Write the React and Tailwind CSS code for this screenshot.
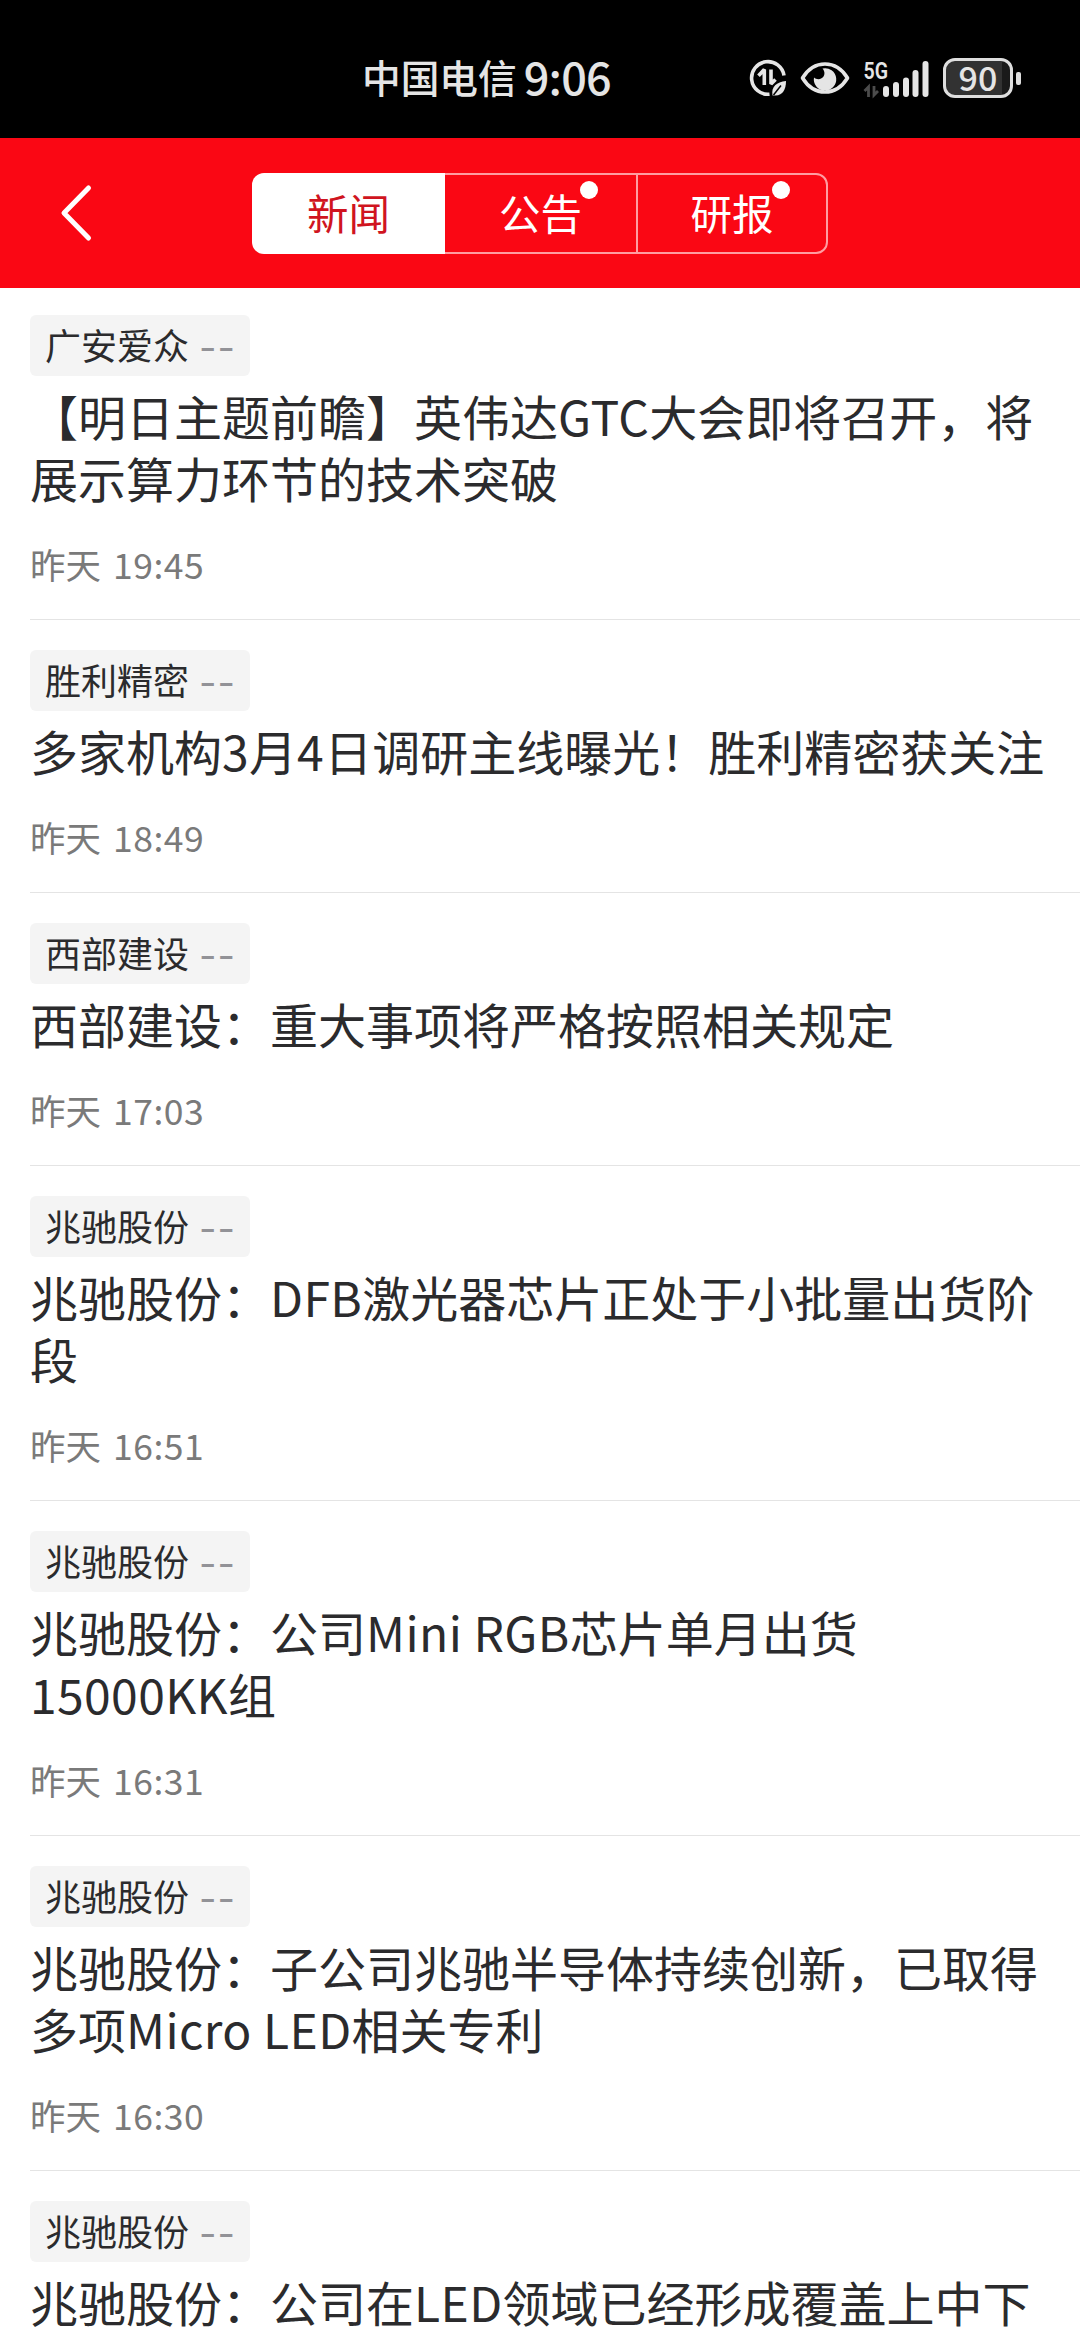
const ITEMS = [
  { stock: "广安爱众", lines: ["【明日主题前瞻】英伟达|GTC|大会即将召开，将", "展示算力环节的技术突破"], time: "19:45" },
  { stock: "胜利精密", lines: ["多家机构|3|月|4|日调研主线曝光！胜利精密获关注"], time: "18:49" },
  { stock: "西部建设", lines: ["西部建设：重大事项将严格按照相关规定"], time: "17:03" },
  { stock: "兆驰股份", lines: ["兆驰股份：|DFB|激光器芯片正处于小批量出货阶", "段"], time: "16:51" },
  { stock: "兆驰股份", lines: ["兆驰股份：公司|Mini RGB|芯片单月出货", "|15000KK|组"], time: "16:31" },
  { stock: "兆驰股份", lines: ["兆驰股份：子公司兆驰半导体持续创新，已取得", "多项|Micro LED|相关专利"], time: "16:30" },
  { stock: "兆驰股份", lines: ["兆驰股份：公司在|LED|领域已经形成覆盖上中下"] },
];

const TABS = [
  { label: "新闻", active: true },
  { label: "公告", dot: true },
  { label: "研报", dot: true },
];

function TitleLine({ text }) {
  return (
    <div className="h-[62px] whitespace-nowrap">
      {text.split("|").map((part, i) =>
        i % 2 ? (
          <span key={i} className="tracking-[0.4px]">{part}</span>
        ) : (
          <span key={i}>{part}</span>
        )
      )}
    </div>
  );
}

function NewsItem({ item }) {
  return (
    <article className="ml-[30px] border-b border-[#e4e4e4] pt-[30px] pb-[29px] first:pt-[27px]">
      <div className="flex h-[61px] w-[220px] items-start rounded-md bg-[#f4f4f4] pl-[15px]">
        <span className="text-[36px] leading-[58px] text-[#2b2b2d]">{item.stock}</span>
        <span className="ml-[10px] font-['Inter'] text-[38px] leading-[65px] tracking-[1px] text-[#929297]">--</span>
      </div>
      <h2 className="mt-2 text-[48px] leading-[62px] text-[#2b2b2d]">
        {item.lines.map((l) => (
          <TitleLine key={l} text={l} />
        ))}
      </h2>
      {item.time && (
        <div className="mt-[30px] flex h-[52px] whitespace-nowrap text-[35.5px] leading-[52px] text-[#7a7a7a]">
          <span>昨天</span>
          <span className="ml-[12px] tracking-[0.5px]">{item.time}</span>
        </div>
      )}
    </article>
  );
}

function DataSaverIcon() {
  return (
    <svg className="h-[38px] w-[38px]" viewBox="0 0 38 38" fill="none">
      <path d="M20.5 35.2A16.3 16.3 0 1 1 35 16.500" stroke="#e5e5e5" strokeWidth="3.6" />
      <path d="M15.300 26V10.500L9.500 16.800" stroke="#e5e5e5" strokeWidth="3.6" strokeLinejoin="bevel" />
      <path d="M22 10.500V25L26.500 20.500" stroke="#e5e5e5" strokeWidth="3.6" strokeLinejoin="bevel" />
      <path d="M23.5 36.5c-1.5-9 4-13.5 13.500-14.500c0 8-3 14.500-10.500 14.500z" fill="#e5e5e5" />
      <path d="M24.500 36l7.500-9.500" stroke="#000" strokeWidth="1.500" />
    </svg>
  );
}

function EyeIcon() {
  return (
    <svg className="h-[36px] w-[50px]" viewBox="0 0 50 36" fill="none">
      <path d="M2.500 18C8 9 16 4 25 4s17 5 22.500 14C42 27 34 32 25 32S8 27 2.500 18z" stroke="#e5e5e5" strokeWidth="3.600" strokeLinejoin="round" />
      <path d="M22.500 8.500A11.200 11.200 0 1 1 14 17.500c2 1.800 5 2.300 7.500.8c3.500-2 4-6.500 1-9.800z" fill="#e5e5e5" />
    </svg>
  );
}

function SignalIcon() {
  return (
    <svg className="h-[40px] w-[68px] overflow-visible" viewBox="0 0 68 40">
      <text x="0.500" y="18.500" fontFamily="Roboto, sans-serif" fontWeight="600" fontSize="23.500" textLength="24.500" lengthAdjust="spacingAndGlyphs" fill="#e5e5e5">5G</text>
      <path d="M1.500 31l4-4v10M11 26v9l4-4" fill="none" stroke="#4c4c4c" strokeWidth="2.800" />
      <g fill="#e5e5e5">
        <rect x="20" y="26" width="6" height="11" rx="3" />
        <rect x="30" y="22" width="6" height="15" rx="3" />
        <rect x="40" y="17.500" width="6" height="19.500" rx="3" />
        <rect x="49.500" y="10" width="6" height="27" rx="3" />
        <rect x="59.500" y="1" width="6" height="36" rx="3" />
      </g>
    </svg>
  );
}

function Battery() {
  return (
    <div className="flex items-center gap-[3px]">
      <div className="h-10 w-[70px] rounded-[12px] border-[3px] border-[#dedede] bg-[linear-gradient(90deg,#323232_88%,#1a1a1a_88%)] text-center font-['Noto_Sans_CJK_SC'] text-[34px] leading-[31px] font-medium text-[#e5e5e5]">
        90
      </div>
      <div className="h-[13px] w-[5px] rounded-[2px] bg-[#dedede]" />
    </div>
  );
}

export default function App() {
  return (
    <div className="h-[2340px] w-[1080px] overflow-hidden bg-white font-['Noto_Sans_CJK_SC',sans-serif]">
      <header className="flex h-[138px] items-center bg-black pt-[18px] pl-[362px] text-[#e5e5e5]">
        <div className="mb-1 flex w-[387px] items-center whitespace-nowrap font-medium">
          <span className="text-[38.700px] leading-[60px]">中国电信</span>
          <span className="ml-[7px] text-[45px] leading-[60px] tracking-[-0.8px]">9:06</span>
        </div>
        <DataSaverIcon />
        <div className="ml-[13px] flex"><EyeIcon /></div>
        <div className="mt-[3px] ml-[13px] flex"><SignalIcon /></div>
        <div className="ml-[12px]"><Battery /></div>
      </header>
      <nav className="flex h-[150px] items-center bg-[#fa0714]">
        <svg className="ml-[58px] h-[60px] w-[36px]" viewBox="0 0 36 60" fill="none">
          <path d="M30.500 5L6 30L30.500 55" stroke="#fff" strokeWidth="5" strokeLinecap="round" strokeLinejoin="round" />
        </svg>
        <div className="mt-px ml-[158px] flex h-[81px] w-[576px]">
          {TABS.map((t, i) => (
            <div
              key={t.label}
              className={
                t.active
                  ? "flex w-[193px] items-center justify-center rounded-l-[12px] bg-white text-[#d01420]"
                  : i === 2
                    ? "flex flex-1 items-center justify-center rounded-r-[12px] border-2 border-[#ff9da2] text-white"
                    : "flex w-[191px] items-center justify-center border-y-2 border-[#ff9da2] text-white"
              }
            >
              <span className="relative mb-1 text-[41.500px] leading-[60px]">
                {t.label}
                {t.dot && <i className="absolute -top-px -right-[16px] h-[18px] w-[18px] rounded-full bg-white" />}
              </span>
            </div>
          ))}
        </div>
      </nav>
      <main>
        {ITEMS.map((item, i) => (
          <NewsItem key={i} item={item} />
        ))}
      </main>
    </div>
  );
}
